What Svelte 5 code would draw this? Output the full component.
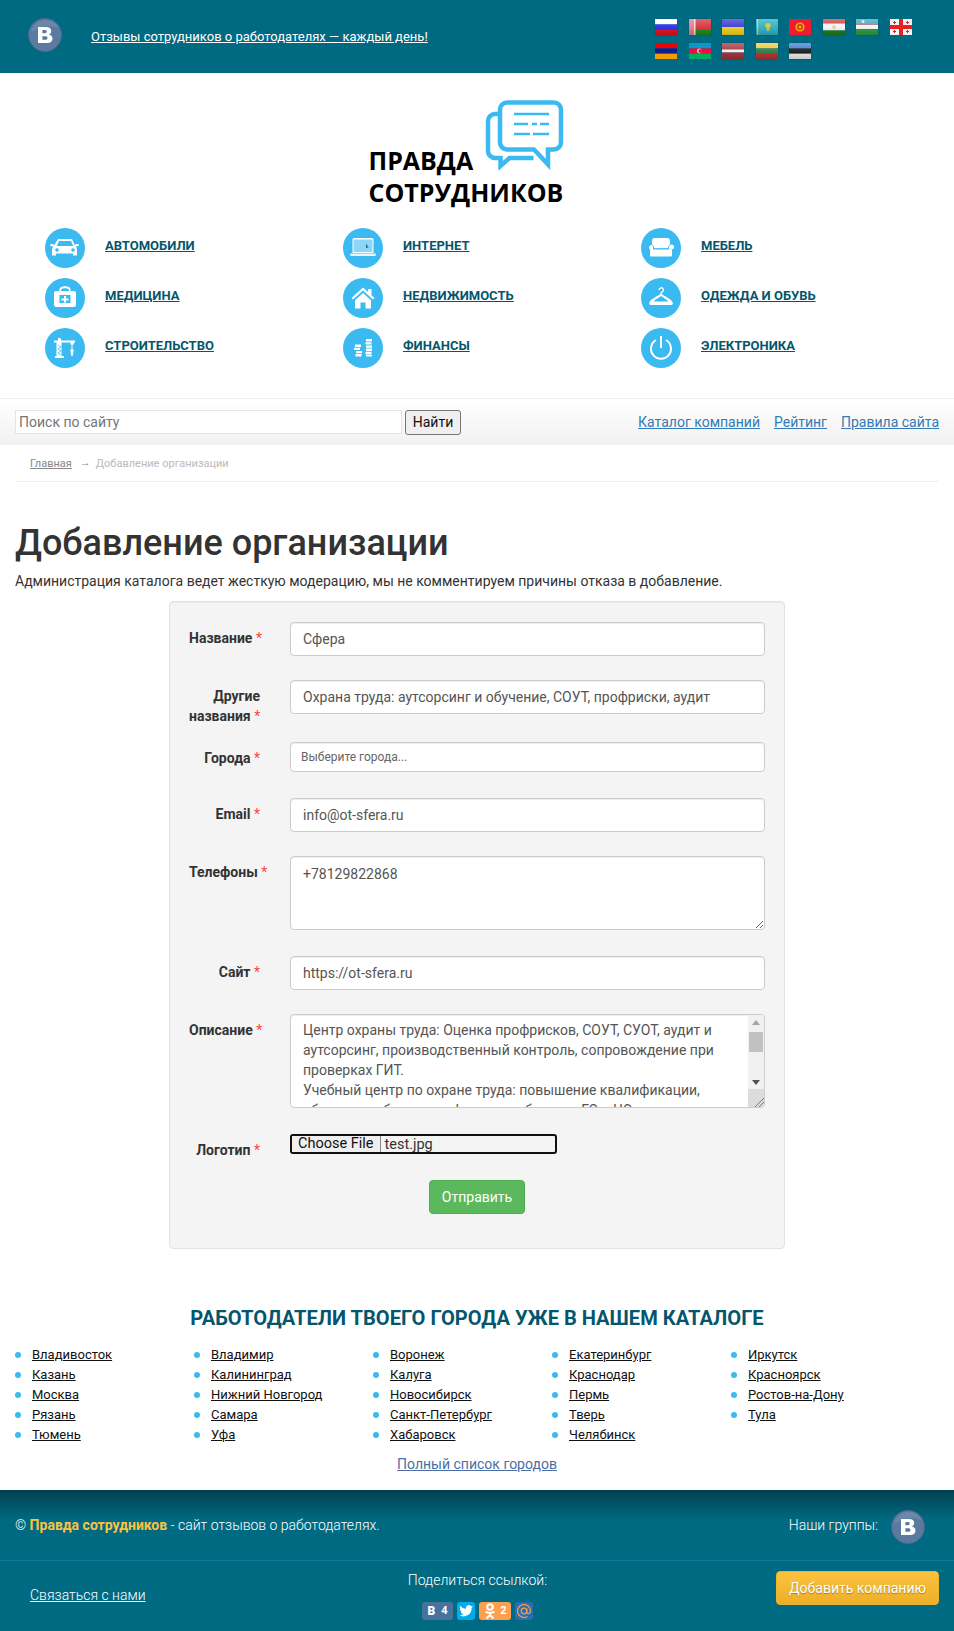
<script>
  // r: x, y, w, h, fill / c: cx, cy, r, fill
  const flags = [
    { gloss: true, r: [[0, 0, 22, 5.4, "#fff"], [0, 5.4, 22, 5.3, "#2a2ae8"], [0, 10.7, 22, 5.3, "#e0101c"]] },
    { gloss: true, r: [[0, 0, 22, 11, "#d8323c"], [0, 11, 22, 5, "#1a8a1a"], [0, 0, 6, 16, "#e87888"], [5, 0, 1.500, 16, "#f4e0e0"]] },
    { gloss: true, r: [[0, 0, 22, 8, "#3a3ad0"], [0, 8, 22, 8, "#ecd020"]] },
    { gloss: true, r: [[0, 0, 22, 16, "#2cb0c0"], [1, 0, 1.200, 16, "#d8c850"]], c: [[12, 6.500, 2.600, "#f0c020"], [12, 10.500, 1.500, "#d8c850"]] },
    { gloss: false, r: [[0, 0, 22, 16, "#ee1c2e"]], c: [[11, 8, 4.600, "#f5a800"], [11, 8, 3, "#c83a20"], [11, 8, 1.500, "#f5a800"]] },
    { gloss: true, r: [[0, 0, 22, 4.500, "#d04040"], [0, 4.500, 22, 7, "#f4f4f4"], [0, 11.500, 22, 4.500, "#1a7a1a"]], c: [[11, 8, 2, "#e8d890"]] },
    { gloss: true, r: [[0, 0, 22, 5, "#3ca8c0"], [0, 5, 22, .700, "#c83040"], [0, 5.700, 22, 4.600, "#f4f4f4"], [0, 10.300, 22, .700, "#c83040"], [0, 11, 22, 5, "#2a9a40"]], c: [[7, 2.500, 1.500, "#cfe8ee"]] },
    { gloss: false, r: [[0, 0, 22, 16, "#f2f2f2"], [9, 0, 4, 16, "#e82020"], [0, 6, 22, 4, "#e82020"], [3, 3, 3, 1, "#d02030"], [4, 2, 1, 3, "#d02030"], [16, 3, 3, 1, "#d02030"], [17, 2, 1, 3, "#d02030"], [3, 12, 3, 1, "#d02030"], [4, 11, 1, 3, "#d02030"], [16, 12, 3, 1, "#d02030"], [17, 11, 1, 3, "#d02030"]] },
    { gloss: false, r: [[0, 0, 22, 5.400, "#f00000"], [0, 5.400, 22, 5.300, "#0a1f96"], [0, 10.700, 22, 5.300, "#f59a00"]] },
    { gloss: false, r: [[0, 0, 22, 5.400, "#0a98c8"], [0, 5.400, 22, 5.300, "#e8103c"], [0, 10.700, 22, 5.300, "#00b060"]], c: [[10.500, 8, 2.400, "#f4f4f4"], [11.200, 8, 1.900, "#e8103c"]] },
    { gloss: true, r: [[0, 0, 22, 6.500, "#a83840"], [0, 6.500, 22, 3, "#f0f0f0"], [0, 9.500, 22, 6.500, "#a03038"]] },
    { gloss: true, r: [[0, 0, 22, 5.400, "#f0c840"], [0, 5.400, 22, 5.300, "#2e7a4a"], [0, 10.700, 22, 5.300, "#b83030"]] },
    { gloss: true, r: [[0, 0, 22, 5.400, "#3f80d0"], [0, 5.400, 22, 5.300, "#1a1a1a"], [0, 10.700, 22, 5.300, "#ececec"]] },
  ];

  const cats = [
    ["Автомобили", "car"],
    ["Интернет", "laptop"],
    ["Мебель", "sofa"],
    ["Медицина", "med"],
    ["Недвижимость", "house"],
    ["Одежда и обувь", "hanger"],
    ["Строительство", "crane"],
    ["Финансы", "coins"],
    ["Электроника", "power"],
  ];

  const cities = [
    ["Владивосток", "Казань", "Москва", "Рязань", "Тюмень"],
    ["Владимир", "Калининград", "Нижний Новгород", "Самара", "Уфа"],
    ["Воронеж", "Калуга", "Новосибирск", "Санкт-Петербург", "Хабаровск"],
    ["Екатеринбург", "Краснодар", "Пермь", "Тверь", "Челябинск"],
    ["Иркутск", "Красноярск", "Ростов-на-Дону", "Тула"],
  ];

  const desc = "Центр охраны труда: Оценка профрисков, СОУТ, СУОТ, аудит и аутсорсинг, производственный контроль, сопровождение при проверках ГИТ.\nУчебный центр по охране труда: повышение квалификации, обучение рабочим профессиям, обучение ГО и ЧС.\nПроектирование и разработка документации.";
</script>

{#snippet vk()}
  <svg class="vk" viewBox="0 0 34 34">
    <circle cx="17" cy="17" r="16.500" fill="#5b7aa0" stroke="#4f6688" />
    <path d="M3 14a15 15 0 0 1 28-4c-8-3-18-2-28 4z" fill="#fff" opacity=".1" />
    <path fill="#fff" d="M10 9h8c3.300 0 5.200 1.600 5.200 4 0 1.700-.9 2.900-2.400 3.400 2.200.4 3.700 1.900 3.700 4 0 2.900-2.200 4.600-5.700 4.600h-8.800zm4.400 3.100v3.100h2.500c1.200 0 1.800-.6 1.800-1.600s-.6-1.500-1.800-1.500zm0 6.100v3.600h3c1.300 0 2.100-.6 2.100-1.800s-.8-1.800-2.100-1.800z" />
  </svg>
{/snippet}

<header class="top">
  {@render vk()}
  <a class="slogan" href="#a">Отзывы сотрудников о работодателях — каждый день!</a>
  <div class="flags">
    {#each flags as f}
      <span class="flag" class:gloss={f.gloss}>
        <svg viewBox="0 0 22 16" width="22" height="16">
          {#each f.r as [x, y, w, h, fill]}
            <rect {x} {y} width={w} height={h} {fill} />
          {/each}
          {#each f.c ?? [] as [cx, cy, r, fill]}
            <circle {cx} {cy} {r} {fill} />
          {/each}
        </svg>
      </span>
    {/each}
  </div>
</header>

<div class="logo-wrap">
  <div class="logo">
    <div class="logo-text"><span>ПРАВДА</span><span>СОТРУДНИКОВ</span></div>
    <svg class="bubbles" viewBox="0 0 80 70" fill="none" stroke="#3bbaf1" stroke-width="4.500">
      <path d="M13 14h-3a7 7 0 0 0-7 7v30a7 7 0 0 0 7 7h5.500v8l9-8h24" />
      <path d="M22 2.500h47a7 7 0 0 1 7 7v33a7 7 0 0 1-7 7h-6v15l-14-15h-27a7 7 0 0 1-7-7v-33a7 7 0 0 1 7-7z" />
      <path stroke-width="2.500" d="M29 14h35M29 24h14M47 24h5M55 24h9M29 34h16M48 34h16" />
    </svg>
  </div>
</div>

<nav class="cats">
  {#each cats as [name, icon]}
    <div class="cat">
      <span class="circle">
        <svg viewBox="0 0 40 40" fill="#fff">
          {#if icon === "car"}
            <path d="M13 11h14l3 6.500 1-1.500h2.500l.3 1.700-2.800.8 1 2.500v6.500h-4v-2h-17v2h-4v-6.500l1-2.500-2.800-.8.3-1.700h2.500l1 1.500zm1 2-2.300 5h16.600l-2.300-5z" />
            <circle cx="12" cy="22" r="1.800" fill="#3bbaf1" /><circle cx="28" cy="22" r="1.800" fill="#3bbaf1" />
          {:else if icon === "laptop"}
            <path d="M11 10h18a1.500 1.500 0 0 1 1.500 1.500v13.500h-21v-13.500a1.500 1.500 0 0 1 1.500-1.500z" />
            <path d="M10.500 11.500h19v12.500h-19z" fill="#8ed6f8" />
            <path d="M7 25.500h26l-.5 2.500h-25z" fill="#e4f5fd" />
            <path d="M23 15.500v5l1.200-1 1.500.3z" fill="#1c6f90" />
          {:else if icon === "sofa"}
            <path d="M14 10h12a3 3 0 0 1 3 3v3.500a3.500 3.500 0 0 0-2 3v.5h-14v-.5a3.500 3.500 0 0 0-2-3v-3.500a3 3 0 0 1 3-3z" />
            <path d="M11 17a2.500 2.500 0 0 1 1 2v2.500h16v-2.500a2.500 2.500 0 1 1 3 2.400v6.100a1 1 0 0 1-1 1h-20a1 1 0 0 1-1-1v-6.100a2.500 2.500 0 0 1 2-4.400z" />
            <path d="M13 20.700h14v.8h-14z" fill="#9adcf8" />
          {:else if icon === "med"}
            <path d="M14.500 13v-1.500c0-4.500 11-4.500 11 0v1.500h-1.500v-1c0-2.500-8-2.500-8 0v1z" />
            <path fill-rule="evenodd" d="M11 13h18a2 2 0 0 1 2 2v12a2 2 0 0 1-2 2h-18a2 2 0 0 1-2-2v-12a2 2 0 0 1 2-2zm3.500 4v8h11v-8z" />
            <path d="M19 18h2v2.500h2.500v2h-2.500v2h-2v-2h-2.500v-2h2.500z" />
          {:else if icon === "house"}
            <path d="M20 9.500l5 4.500v-3h3.500v6.200l3 2.800-1.500 1.600-10-9.200-10 9.200-1.500-1.600z" />
            <path fill-rule="evenodd" d="M20 15l8 7.300v8.200h-5.500v-6h-5v6h-5.500v-8.200z" />
          {:else if icon === "hanger"}
            <path fill="none" stroke="#fff" stroke-width="1.400" d="M18 12a2.200 2.200 0 1 1 3.200 2c-.9.4-1.200 1-1.200 2" />
            <path d="M20 15.500c3 2.500 9.500 5 11.500 8.500.6 1.300.3 3-1 3h-21c-1.300 0-1.600-1.700-1-3 2-3.500 8.500-6 11.500-8.500zm0 2.600c-2 1.500-5.500 3.300-7.500 5.400h15c-2-2.100-5.500-3.900-7.500-5.400z" />
          {:else if icon === "crane"}
            <path d="M13 10h2.500l1 2.500h13.500v2h-1v2h-3.500v-2h-9v13.500h2.500v2h-9v-2h1.500v-13.500h-2.500v-2h4z" />
            <path d="M26.500 14.500h1v7h-1zM25.300 21.500h3.400l-.7 5-1 2.500-1-2.500z" />
            <path fill="none" stroke="#3bbaf1" stroke-width=".8" d="M13 17l3 2-3 2 3 2-3 2 3 2" />
          {:else if icon === "coins"}
            <path d="M23 11h6v2.400h-6zM22.500 14.200h6v2.400h-6zM23 17.400h6v2.400h-6zM23 20.600h6v2.400h-6zM22.500 23.800h6v2.400h-6zM23 26.800h6v1.700h-6z" />
            <path d="M12 16.500h6v2.400h-6zM11 19.700h6v2.400h-6zM13 22.900h6v2.400h-6zM12.500 26.100h6v2.400h-6z" />
          {:else}
            <path fill="none" stroke="#fff" stroke-width="2" d="M15 12a10 10 0 1 0 10 0" />
            <path d="M19 8h2v12h-2z" />
          {/if}
        </svg>
      </span>
      <a href="#a">{name}</a>
    </div>
  {/each}
</nav>

<div class="searchbar">
  <div class="search">
    <input type="text" placeholder="Поиск по сайту" />
    <button>Найти</button>
  </div>
  <div class="links">
    <a href="#a">Каталог компаний</a>
    <a href="#a">Рейтинг</a>
    <a href="#a">Правила сайта</a>
  </div>
</div>

<main>
  <div class="crumbs"><a href="#a">Главная</a><span class="arrow">→</span><span>Добавление организации</span></div>
  <h1>Добавление организации</h1>
  <p class="lead">Администрация каталога ведет жесткую модерацию, мы не комментируем причины отказа в добавление.</p>

  <form class="well">
    <div class="row">
      <label>Название <b>*</b></label>
      <input class="ctl" value="Сфера" />
    </div>
    <div class="row r2">
      <label>Другие<br />названия <b>*</b></label>
      <input class="ctl" value="Охрана труда: аутсорсинг и обучение, СОУТ, профриски, аудит" />
    </div>
    <div class="row r3">
      <label>Города <b>*</b></label>
      <input class="ctl city" placeholder="Выберите города..." />
    </div>
    <div class="row">
      <label>Email <b>*</b></label>
      <input class="ctl" value="info@ot-sfera.ru" />
    </div>
    <div class="row r5">
      <label>Телефоны <b>*</b></label>
      <textarea class="ctl ph">+78129822868</textarea>
    </div>
    <div class="row">
      <label>Сайт <b>*</b></label>
      <input class="ctl" value="https://ot-sfera.ru" />
    </div>
    <div class="row r7">
      <label>Описание <b>*</b></label>
      <div class="desc-wrap">
        <textarea class="ctl desc">{desc}</textarea>
        <div class="scroll">
          <span class="up"></span>
          <span class="thumb"></span>
          <span class="down"></span>
          <span class="corner"></span>
        </div>
      </div>
    </div>
    <div class="row r8">
      <label>Логотип <b>*</b></label>
      <div class="file"><span class="choose">Choose File</span><span class="fname">test.jpg</span></div>
    </div>
    <div class="submit"><button type="button">Отправить</button></div>
  </form>

  <h2>Работодатели твоего города уже в нашем каталоге</h2>
  <div class="cities">
    {#each cities as col}
      <ul>
        {#each col as c}
          <li><a href="#a">{c}</a></li>
        {/each}
      </ul>
    {/each}
  </div>
  <div class="allcities"><a href="#a">Полный список городов</a></div>
</main>

<footer>
  <div class="f1">
    <div>© <b>Правда сотрудников</b> - сайт отзывов о работодателях.</div>
    <div class="groups"><span>Наши группы:</span>{@render vk()}</div>
  </div>
  <div class="f2">
    <a class="contact" href="#a">Связаться с нами</a>
    <div class="share">
      <div>Поделиться ссылкой:</div>
      <div class="shares">
        <span class="sb vkb"><em>В</em><small>4</small></span>
        <span class="sb tw">
          <svg viewBox="0 0 18 18"><path fill="#fff" d="M16 4.500c-.5.2-1 .4-1.600.4.600-.3 1-.9 1.200-1.500-.5.300-1.100.6-1.800.7a2.800 2.800 0 0 0-4.800 2.600c-2.300-.1-4.400-1.200-5.800-3-.8 1.300-.4 3 .9 3.800-.5 0-.9-.1-1.300-.4 0 1.400 1 2.500 2.300 2.800-.4.100-.8.100-1.300 0 .4 1.100 1.400 1.900 2.600 2a5.700 5.700 0 0 1-4.200 1.200 8 8 0 0 0 12.400-7.100c.6-.4 1-.9 1.400-1.500z" /></svg>
        </span>
        <span class="sb ok">
          <svg viewBox="0 0 14 18"><g fill="none" stroke="#fff" stroke-width="2"><circle cx="7" cy="5" r="2.800" /><path d="M2.500 9.500c2.500 1.800 6.500 1.800 9 0M7 11v2M3.500 16.500l3.500-3.500 3.500 3.500" /></g></svg>
          <small>2</small>
        </span>
        <span class="sb ml">
          <svg viewBox="0 0 18 18"><g fill="none" stroke="#f0a040" stroke-width="1.300"><circle cx="9" cy="9" r="2.800" /><path d="M11.800 6.500v3.500c0 2.500 3.700 2 3.700-1a6.500 6.500 0 1 0-3 5.500" /></g></svg>
        </span>
      </div>
    </div>
    <button class="add">Добавить компанию</button>
  </div>
</footer>

<style>
  :global(body) {
    margin: 0;
    font-family: Roboto, "Liberation Sans", sans-serif;
    font-size: 14px;
    color: #333;
    background: #fff;
  }

  .top {
    height: 73px;
    background: #006a82;
    display: flex;
    align-items: center;
    padding-left: 28px;
    box-sizing: border-box;
  }

  .vk {
    width: 34px;
    height: 34px;
    flex: none;
  }

  .top .vk {
    margin-top: -3px;
  }

  .slogan {
    margin-left: 29px;
    color: #fff;
    font-size: 13px;
  }

  .flags {
    margin-left: auto;
    margin-right: 41px;
    align-self: flex-start;
    margin-top: 19px;
    width: 258px;
    display: flex;
    flex-wrap: wrap;
    gap: 8px 11.500px;
  }

  .flag {
    width: 22px;
    height: 16px;
    position: relative;
  }

  .flag svg {
    display: block;
  }

  .flag.gloss {
    box-shadow: 0 0 1px rgba(0, 0, 0, .4);
  }

  .flag.gloss::after {
    content: "";
    position: absolute;
    inset: 0;
    background: linear-gradient(rgba(255, 255, 255, .25), rgba(255, 255, 255, .05) 50%, rgba(0, 0, 0, .15));
  }

  .logo-wrap {
    display: flex;
    justify-content: center;
    padding-top: 27px;
  }

  .logo {
    width: 194px;
    height: 107px;
    margin-left: -23px;
    position: relative;
  }

  .logo-text {
    position: absolute;
    left: 0;
    top: 44px;
    font-family: "Open Sans", sans-serif;
    font-weight: 700;
    font-size: 25px;
    line-height: 32px;
    color: #000;
    white-space: nowrap;
  }

  .logo-text span {
    display: block;
    width: fit-content;
  }

  .bubbles {
    position: absolute;
    right: -2px;
    top: 0;
    width: 80px;
    height: 70px;
  }

  .cats {
    display: grid;
    grid-template-columns: repeat(3, 298px);
    grid-auto-rows: 40px;
    padding: 21px 0 0 45px;
    row-gap: 10px;
    height: 191px;
    box-sizing: border-box;
  }

  .cat {
    display: flex;
    align-items: center;
    height: 40px;
  }

  .circle {
    width: 40px;
    height: 40px;
    border-radius: 50%;
    background: #3bbaf1;
    flex: none;
  }

  .circle svg {
    display: block;
  }

  .cat a {
    margin-left: 20px;
    color: #04566e;
    font-size: 13px;
    font-weight: 700;
    text-transform: uppercase;
    position: relative;
    top: -3px;
  }

  .searchbar {
    height: 47px;
    border-top: 1px solid #eee;
    background: linear-gradient(#fff, #f1f1f1);
    display: flex;
    align-items: center;
    justify-content: space-between;
    padding: 0 15px;
    box-sizing: border-box;
  }

  .search {
    display: flex;
    align-items: center;
    gap: 3px;
  }

  .search input {
    width: 387px;
    height: 24px;
    box-sizing: border-box;
    border: 1px solid #e4e4e4;
    padding: 0 3px;
    font: 14px Roboto, sans-serif;
  }

  .search input::placeholder {
    color: #757575;
  }

  .search button {
    width: 56px;
    height: 25px;
    padding: 0;
    border: 1px solid #767676;
    border-radius: 3px;
    background: #efefef;
    color: #111;
    font: 14px Roboto, sans-serif;
  }

  .links {
    display: flex;
    gap: 14px;
    font-size: 14px;
  }

  .links a {
    color: #337ab7;
  }

  main {
    padding: 0 15px;
  }

  .crumbs {
    height: 37px;
    box-sizing: border-box;
    padding: 12px 15px 0;
    border-bottom: 1px solid #eee;
    border-radius: 0 0 4px 4px;
    font-size: 11px;
    color: #bbb;
  }

  .crumbs a {
    color: #888;
  }

  .arrow {
    margin: 0 5px 0 8px;
    color: #888;
    position: relative;
    top: -1px;
  }

  h1 {
    margin: 41px 0 0;
    font-size: 36px;
    font-weight: 500;
    line-height: 40px;
    color: #333;
  }

  .lead {
    margin: 8px 0 0;
    font-size: 14px;
    line-height: 20px;
  }

  .well {
    width: 616px;
    height: 648px;
    box-sizing: border-box;
    margin: 10px auto 0;
    background: #f4f4f4;
    border: 1px solid #e3e3e3;
    border-radius: 4px;
    box-shadow: inset 0 1px 1px rgba(0, 0, 0, .05);
    padding: 20px 19px 0 0;
  }

  .row {
    display: flex;
    align-items: flex-start;
    height: 58px;
  }

  .row label {
    width: 120px;
    box-sizing: border-box;
    padding: 6px 30px 0 19px;
    font-weight: 700;
    font-size: 14px;
    line-height: 20px;
    text-align: right;
    white-space: nowrap;
    flex: none;
    color: #333;
  }

  .row label b {
    color: #f44;
    font-weight: 400;
  }

  .ctl {
    width: 475px;
    height: 34px;
    box-sizing: border-box;
    margin: 0;
    padding: 6px 12px;
    border: 1px solid #ccc;
    border-radius: 4px;
    background: #fff;
    font: 14px/20px Roboto, sans-serif;
    color: #555;
    box-shadow: inset 0 1px 1px rgba(0, 0, 0, .075);
  }

  .r2 {
    height: 62px;
  }

  .r3 {
    height: 56px;
  }

  .city {
    height: 30px;
    padding: 0 10px;
    font-size: 12px;
  }

  .city::placeholder {
    color: #666;
  }

  .r5 {
    height: 100px;
  }

  .ph {
    height: 74px;
    padding-top: 7px;
  }

  .desc-wrap {
    position: relative;
    width: 475px;
    height: 94px;
  }

  .desc {
    height: 94px;
    padding: 5px 27px 0 12px;
    overflow: hidden;
    resize: none;
    display: block;
  }

  /* native scrollbar is hidden in the headless browser, so draw it */
  .scroll {
    position: absolute;
    top: 1px;
    right: 1px;
    bottom: 1px;
    width: 16px;
    background: #f1f1f1;
    border-radius: 0 3px 3px 0;
  }

  .scroll span {
    position: absolute;
    display: block;
  }

  .up {
    top: 5px;
    left: 4px;
    border: 4px solid transparent;
    border-top: 0;
    border-bottom: 5px solid #a3a3a3;
  }

  .thumb {
    top: 17px;
    left: 1px;
    width: 14px;
    height: 20px;
    background: #c1c1c1;
  }

  .down {
    top: 65px;
    left: 4px;
    border: 4px solid transparent;
    border-bottom: 0;
    border-top: 5px solid #505050;
  }

  .corner {
    left: 0;
    right: 0;
    bottom: 0;
    height: 18px;
    background:
      linear-gradient(135deg, transparent 72%, #777 72%, #777 76%, transparent 76%, transparent 84%, #777 84%, #777 88%, transparent 88%),
      #dcdcdc;
  }

  .r5 .ctl {
    resize: vertical;
  }

  .r7 {
    height: 120px;
  }

  .r8 {
    height: 46px;
  }

  .file {
    width: 267px;
    height: 20px;
    box-sizing: border-box;
    border: 2px solid #111;
    border-radius: 3px;
    display: flex;
    align-items: center;
    color: #111;
    font-size: 14.500px;
    background: #f4f4f4;
  }

  .choose {
    padding: 0 6px;
    border-right: 1px solid #888;
    background: #efefef;
    height: 100%;
    line-height: 16px;
    box-sizing: border-box;
  }

  .fname {
    padding-left: 4px;
    color: #333;
  }

  .submit {
    display: flex;
    justify-content: center;
    margin-left: 19px;
  }

  .submit button {
    width: 96px;
    height: 34px;
    padding: 0;
    border: 1px solid #4cae4c;
    border-radius: 4px;
    background: #5cb85c;
    color: #fff;
    font: 14px Roboto, sans-serif;
  }

  h2 {
    margin: 56px 0 0;
    text-align: center;
    text-transform: uppercase;
    font-size: 20.100px;
    font-weight: 700;
    line-height: 26px;
    color: #04566e;
  }

  .cities {
    display: flex;
    margin-top: 14px;
  }

  .cities ul {
    width: 179px;
    margin: 0;
    padding: 0;
    list-style: none;
  }

  .cities li {
    line-height: 20px;
    font-size: 13px;
    padding-left: 17px;
    position: relative;
  }

  .cities li::before {
    content: "";
    position: absolute;
    left: 0;
    top: 7px;
    width: 6px;
    height: 6px;
    border-radius: 50%;
    background: #3bbaf1;
  }

  .cities a {
    color: #111;
  }

  .allcities {
    text-align: center;
    margin-top: 9px;
    height: 36px;
    line-height: 20px;
  }

  .allcities a {
    color: #4a6fa5;
  }

  footer {
    background: linear-gradient(#00414f, #006a82 30px);
    color: #fff;
    height: 141px;
    font-weight: 300;
  }

  .f1 {
    height: 71px;
    display: flex;
    align-items: center;
    justify-content: space-between;
    padding: 0 29px 0 15px;
    box-sizing: border-box;
    border-bottom: 1px solid #0a7d99;
  }

  .f1 b {
    color: #fcc23f;
    font-weight: 700;
  }

  .groups {
    display: flex;
    align-items: center;
    gap: 13px;
  }

  .groups .vk {
    margin-top: 4px;
  }

  .f2 {
    display: grid;
    grid-template-columns: 1fr auto 1fr;
    align-items: start;
    padding: 0 15px 0 30px;
  }

  .contact {
    color: #fff;
    margin-top: 26px;
    justify-self: start;
  }

  .share {
    text-align: center;
    margin-top: 11px;
    position: relative;
    left: -7px;
  }

  .shares {
    display: flex;
    justify-content: center;
    gap: 4px;
    margin-top: 14px;
  }

  .sb {
    height: 18px;
    min-width: 18px;
    border-radius: 3px;
    display: inline-flex;
    align-items: center;
    justify-content: center;
    font-size: 11px;
    line-height: 18px;
  }

  .sb svg {
    width: 18px;
    height: 18px;
    flex: none;
  }

  .sb small {
    font-size: 11px;
    font-weight: 700;
  }

  .vkb {
    width: 31px;
    background: #48729e;
    gap: 6px;
  }

  .vkb em {
    font-style: normal;
    font-weight: 900;
    font-size: 12px;
  }

  .tw {
    background: #00aced;
  }

  .ok {
    width: 32px;
    background: #ff9f4d;
    gap: 3px;
  }

  .ok svg {
    width: 14px;
  }

  .ml {
    background: #2a6cb5;
  }

  .add {
    justify-self: end;
    width: 163px;
    height: 34px;
    margin-top: 10px;
    padding: 0;
    border: 1px solid #eeb32f;
    border-radius: 4px;
    background: linear-gradient(#fcc23f, #ecaf28);
    color: #fff;
    font: 14px Roboto, sans-serif;
    text-shadow: 0 1px 1px rgba(0, 0, 0, .3);
  }
</style>
